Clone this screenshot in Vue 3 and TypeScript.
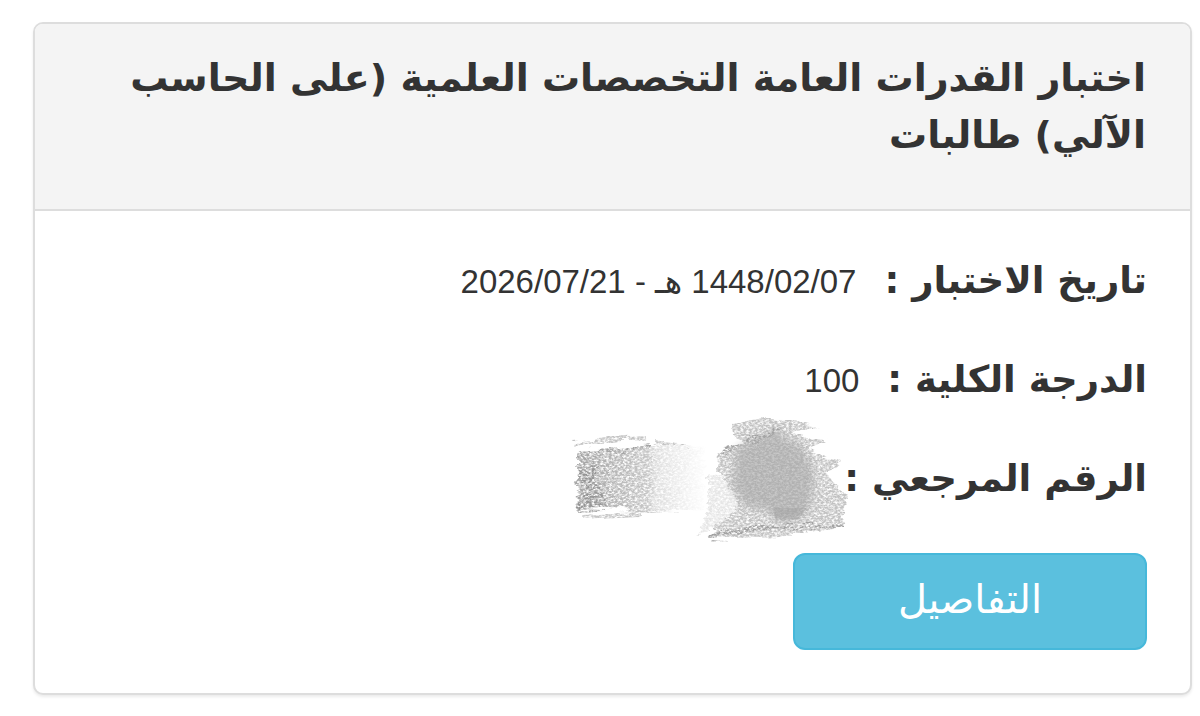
<script setup lang="ts">
interface ExamField {
  id: string
  label: string
  value: string
  hidden?: boolean
}

const title = 'اختبار القدرات العامة التخصصات العلمية (على الحاسب الآلي) طالبات'

const fields: ExamField[] = [
  { id: 'date', label: 'تاريخ الاختبار :', value: '1448/02/07 هـ - 2026/07/21' },
  { id: 'score', label: 'الدرجة الكلية :', value: '100' },
  { id: 'reference', label: 'الرقم المرجعي :', value: '', hidden: true },
]
</script>

<template>
  <main class="page" dir="rtl" lang="ar">
    <article class="card">
      <header class="card-header">
        <h1 class="title">{{ title }}</h1>
      </header>
      <div class="card-body">
        <dl class="fields">
          <div v-for="field in fields" :key="field.id" class="field">
            <dt class="label">{{ field.label }}</dt>
            <dd class="value">
              <template v-if="!field.hidden">{{ field.value }}</template>
              <svg v-else class="scribble" viewBox="0 0 300 150" aria-hidden="true">
                <defs>
                  <filter id="pencil" x="-10%" y="-10%" width="120%" height="120%" color-interpolation-filters="sRGB">
                    <feTurbulence type="fractalNoise" baseFrequency="0.04 0.2" numOctaves="2" seed="4" result="waves" />
                    <feDisplacementMap in="SourceGraphic" in2="waves" scale="12" xChannelSelector="R" yChannelSelector="B" result="rough" />
                    <feTurbulence type="fractalNoise" baseFrequency="0.35 0.55" numOctaves="4" seed="9" result="noise" />
                    <feColorMatrix in="noise" type="matrix" values="0 0 0 0 0  0 0 0 0 0  0 0 0 0 0  2.4 0 0 0 -0.55" result="grain" />
                    <feComposite in="rough" in2="grain" operator="in" />
                    <feGaussianBlur stdDeviation="0.4" />
                  </filter>
                  <filter id="soft" x="-20%" y="-20%" width="140%" height="140%">
                    <feGaussianBlur stdDeviation="4" />
                  </filter>
                  <linearGradient id="fade" gradientUnits="userSpaceOnUse" x1="14" y1="0" x2="150" y2="0">
                    <stop offset="0" stop-color="#a0a0a0" />
                    <stop offset="0.3" stop-color="#b6b6b6" />
                    <stop offset="0.56" stop-color="#c6c6c6" />
                    <stop offset="0.62" stop-color="#dedede" />
                    <stop offset="0.82" stop-color="#f0f0f0" />
                    <stop offset="1" stop-color="#fff" />
                  </linearGradient>
                </defs>
                <g filter="url(#pencil)">
                  <path d="M20 54L94 46L146 48V110L92 112L48 109L18 110L22 92L17 88L20 72Z" fill="url(#fade)" />
                  <path d="M15 44L50 40L85 38M96 42L128 46M26 117L58 115L84 114" fill="none" stroke="#c4c4c4" stroke-width="4" />
                  <path d="M22 53L94 46" stroke="#a4a4a4" stroke-width="4" />
                  <path d="M20 72L40 66L38 84L46 96L50 108L18 109L28 90Z" fill="#777" opacity="0.4" />
                  <path d="M174 24L205 18L259 26L232 35L269 41L250 52L283 62L267 75L281 85L289 97L288 112L284 128L222 136L154 139L160 122L178 108L166 91L162 86L160 70L161 53L184 42L175 35Z" fill="#c2c2c2" />
                  <path d="M150 74L164 76L182 106L156 128L140 134L150 108Z" fill="#e6e6e6" />
                  <path d="M160 54L222 29M152 137L202 127L284 127" stroke="#a2a2a2" stroke-width="4" fill="none" />
                </g>
                <path d="M178 48L222 27L225 38L240 42L252 60L256 80L252 108L238 121H220L208 110L186 106L174 86Z" fill="#a6a6a6" opacity="0.6" filter="url(#soft)" />
                <path d="M214 108H249L240 119L218 120Z" fill="#9c9c9c" opacity="0.35" />
              </svg>
            </dd>
          </div>
        </dl>
        <button type="button" class="details">التفاصيل</button>
      </div>
    </article>
  </main>
</template>

<style>
body {
  margin: 0;
  background: #fff;
}
</style>

<style scoped>
.page {
  padding: 22px 8px 20px 33px;
  font-family: "Liberation Sans", "DejaVu Sans", sans-serif;
  color: #333;
}

.card {
  border: 2px solid #ddd;
  border-radius: 10px;
  background: #fff;
  box-shadow: 0 2px 3px rgba(0, 0, 0, 0.08);
  overflow: hidden;
}

.card-header {
  padding: 26px 44px 45px;
  background: #f4f4f4;
  border-bottom: 2px solid #ddd;
}

.title {
  margin: 0;
  font-family: "DejaVu Sans", sans-serif;
  font-size: 38px;
  font-weight: 700;
  line-height: 57px;
}

.card-body {
  padding: 21px 43px 43px;
}

.fields {
  margin: 0 0 25px;
}

.field {
  display: flex;
  align-items: baseline;
  gap: 28px;
  line-height: 98px;
}

.label {
  font-family: "DejaVu Sans", sans-serif;
  font-size: 37px;
  font-weight: 700;
}

.value {
  position: relative;
  margin: 0;
  font-size: 33px;
}

.scribble {
  position: absolute;
  right: -42px;
  top: -91px;
  width: 300px;
  height: 150px;
}

.details {
  display: block;
  width: 354px;
  height: 97px;
  padding: 0 0 6px;
  border: 2px solid #46b8da;
  border-radius: 12px;
  background: #5bc0de;
  color: #fff;
  font-family: "DejaVu Sans", sans-serif;
  font-size: 40px;
  font-weight: 400;
  cursor: pointer;
}
</style>
